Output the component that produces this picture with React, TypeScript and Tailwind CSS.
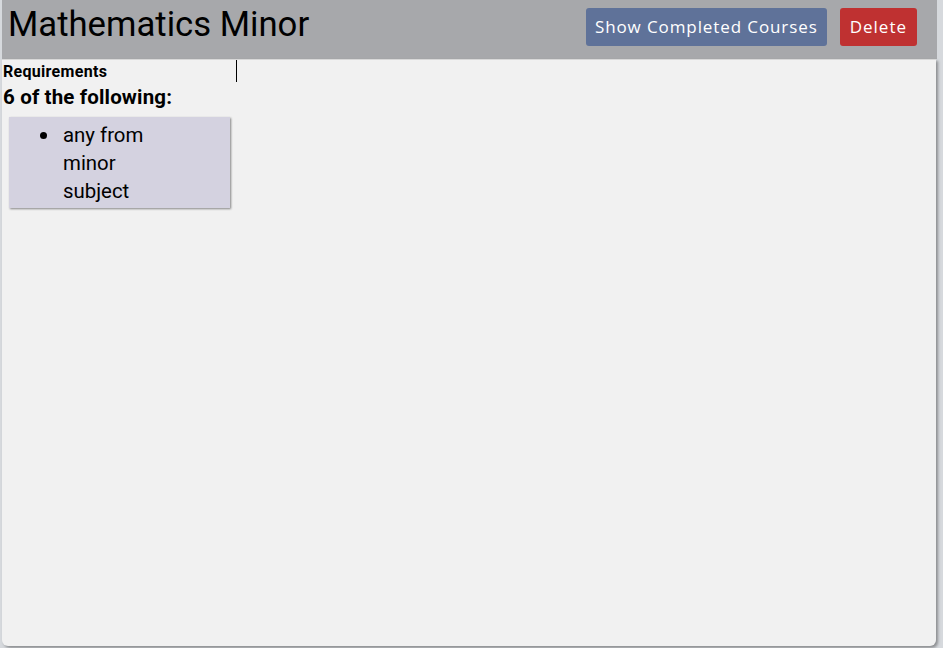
import React from "react";

export default function App() {
  return (
    <div className="w-[943px] h-[648px] bg-[#d6d9dd] overflow-hidden" style={{ fontFamily: "Roboto, 'Liberation Sans', sans-serif" }}>
      <div className="ml-[2px] w-[935px] h-[646px] flex flex-col">
        <div className="h-[59px] bg-[#a7a8ab] flex items-start justify-between shrink-0">
          <div className="pl-[6px] pt-[3px] text-[34.7px] leading-[42px] text-black">Mathematics Minor</div>
          <div className="flex gap-[13px] pt-[8px] pr-[20px]" style={{ fontFamily: "'Open Sans', 'Liberation Sans', sans-serif" }}>
            <button className="h-[38px] px-[9px] bg-[#5f7299] text-white text-[17px] tracking-[0.9px] rounded-[3px]">Show Completed Courses</button>
            <button className="h-[38px] px-[10px] bg-[#bf3131] text-white text-[17px] tracking-[1px] rounded-[3px]">Delete</button>
          </div>
        </div>
        <div className="flex-1 bg-[#f1f1f1] rounded-b-[6px] mr-[1px] shadow-[2px_2px_3px_rgba(0,0,0,0.35)] border-t border-[#d8d8d8]">
          <div className="w-[235px] h-[22px] border-r border-black">
            <div className="pl-[1px] pt-[2px] text-[16px] leading-[20px] font-bold tracking-[0.3px] text-black">Requirements</div>
          </div>
          <div className="pl-[1px] text-[20.5px] leading-[30px] font-bold tracking-[0.15px] text-black">6 of the following:</div>
          <div className="ml-[7px] mt-[5px] w-[221px] bg-[#d4d2e0] shadow-[1px_1px_2px_rgba(0,0,0,0.45)] pt-[4px] pb-[3px]">
            <ul className="pl-[54px] text-[20.4px] leading-[28px] text-black">
              <li className="relative w-[95px]">
                <span className="absolute left-[-23px] top-[11px] w-[7px] h-[7px] rounded-full bg-black" />
                any from minor subject
              </li>
            </ul>
          </div>
        </div>
      </div>
    </div>
  );
}
